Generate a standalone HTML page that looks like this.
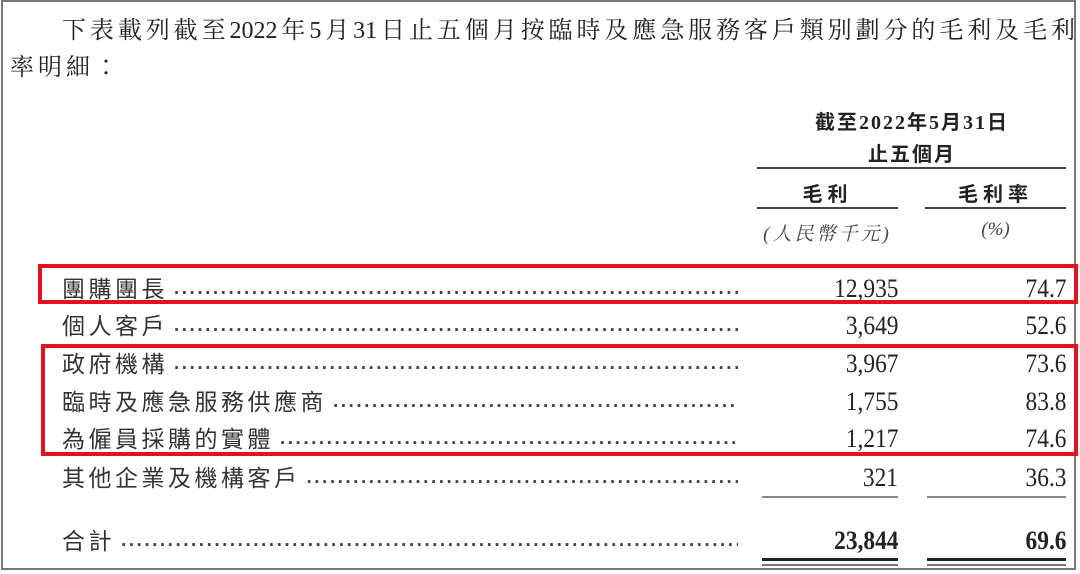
<!DOCTYPE html>
<html><head><meta charset="utf-8"><style>
body{margin:0;width:1080px;height:574px;background:#fff;position:relative;overflow:hidden;font-family:"Liberation Serif","Noto Serif CJK TC",serif;color:#222}
.frame{position:absolute;left:1px;top:0;width:1075px;height:570px;border:2px solid #777;box-sizing:border-box}
.a{position:absolute;white-space:nowrap}
.p1{left:62px;top:16px;width:1013px;font-size:24px;text-align:justify;text-align-last:justify;line-height:30px}
.p2{left:10px;top:53px;font-size:24px;letter-spacing:4px;line-height:30px}
.h{font-family:"Liberation Serif","Noto Sans CJK TC",sans-serif;font-weight:bold;font-size:20px;text-align:center;letter-spacing:2px}
.ln{position:absolute;height:2px;background:#444}
.row{position:absolute;left:62px;width:676px;height:32px;display:flex;font-family:"Liberation Sans","Noto Sans CJK TC",sans-serif;font-size:23px;letter-spacing:3.5px;line-height:32px;color:#333}
.row .d{flex:1;overflow:hidden;letter-spacing:2.5px;font-size:19px;font-weight:bold;margin-left:6px;white-space:nowrap;color:#444}
.n{position:absolute;font-size:26px;text-align:right;line-height:32px;color:#222;transform:scaleX(0.9);transform-origin:right}
.red{position:absolute;border:4px solid #e3121f;box-sizing:border-box}
</style></head><body>
<div class="frame"></div>
<div class="a p1">下表載列截至2022年5月31日止五個月按臨時及應急服務客戶類別劃分的毛利及毛利</div>
<div class="a p2">率明細：</div>
<div class="a h" style="left:757px;width:310px;top:106px">截至2022年5月31日</div>
<div class="a h" style="left:757px;width:310px;top:138px">止五個月</div>
<div class="ln" style="left:757px;width:309px;top:167px"></div>
<div class="a h" style="left:757px;width:141px;top:178px;letter-spacing:5px">毛利</div>
<div class="a h" style="left:925px;width:141px;top:178px;letter-spacing:5px">毛利率</div>
<div class="ln" style="left:757px;width:141px;top:207px"></div>
<div class="ln" style="left:925px;width:141px;top:207px"></div>
<div class="a" style="left:757px;width:141px;top:219px;text-align:center;font-style:italic;font-size:19px;color:#444;letter-spacing:3px">(人民幣千元)</div>
<div class="a" style="left:925px;width:141px;top:219px;text-align:center;font-style:italic;font-size:19px;color:#444">(%)</div>

<div class="row" style="top:273px"><span>團購團長</span><span class="d">..................................................................................................................................</span></div>
<div class="n" style="right:182px;top:273px">12,935</div><div class="n" style="right:14px;top:273px">74.7</div>
<div class="row" style="top:310px"><span>個人客戶</span><span class="d">..................................................................................................................................</span></div>
<div class="n" style="right:182px;top:310px">3,649</div><div class="n" style="right:14px;top:310px">52.6</div>
<div class="row" style="top:348px"><span>政府機構</span><span class="d">..................................................................................................................................</span></div>
<div class="n" style="right:182px;top:348px">3,967</div><div class="n" style="right:14px;top:348px">73.6</div>
<div class="row" style="top:386px"><span>臨時及應急服務供應商</span><span class="d">..................................................................................................................................</span></div>
<div class="n" style="right:182px;top:386px">1,755</div><div class="n" style="right:14px;top:386px">83.8</div>
<div class="row" style="top:423px"><span>為僱員採購的實體</span><span class="d">..................................................................................................................................</span></div>
<div class="n" style="right:182px;top:423px">1,217</div><div class="n" style="right:14px;top:423px">74.6</div>
<div class="row" style="top:462px"><span>其他企業及機構客戶</span><span class="d">..................................................................................................................................</span></div>
<div class="n" style="right:182px;top:462px">321</div><div class="n" style="right:14px;top:462px">36.3</div>
<div class="ln" style="left:762px;width:136px;top:496px;background:#888"></div>
<div class="ln" style="left:927px;width:139px;top:496px;background:#888"></div>
<div class="row" style="top:525px"><span>合計</span><span class="d">..................................................................................................................................</span></div>
<div class="n" style="right:182px;top:525px;font-weight:bold">23,844</div><div class="n" style="right:14px;top:525px;font-weight:bold">69.6</div>
<div class="ln" style="left:762px;width:136px;top:558px;height:3px;background:#222"></div>
<div class="ln" style="left:927px;width:139px;top:558px;height:3px;background:#222"></div>
<div class="ln" style="left:762px;width:136px;top:564px;background:#777"></div>
<div class="ln" style="left:927px;width:139px;top:564px;background:#777"></div>

<div class="red" style="left:38px;top:264px;width:1040px;height:40px"></div>
<div class="red" style="left:41px;top:344px;width:1037px;height:112px"></div>
</body></html>
